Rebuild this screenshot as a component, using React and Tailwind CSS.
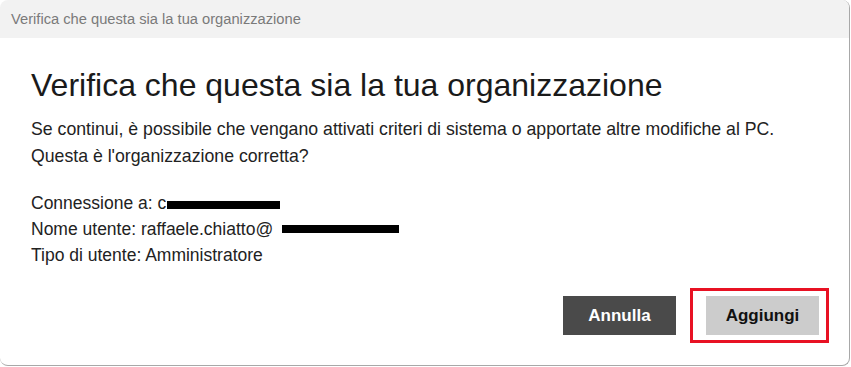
export default function App() {
  const font = { fontFamily: '"Liberation Sans", Arial, sans-serif' };

  return (
    <div className="w-[851px] h-[367px] bg-white" style={font}>
      <div className="w-[850px] h-[366px] flex flex-col rounded-[8px] border-r border-b border-[#a8a8a8] overflow-hidden bg-white">
        {/* title bar */}
        <div className="h-[38px] shrink-0 bg-[#f2f2f2] flex items-center pl-[11px] text-[14.7px] text-[#7a7a7a]">
          Verifica che questa sia la tua organizzazione
        </div>

        <div className="flex-1 flex flex-col pl-[31px] pr-[20px]">
          <h1 className="mt-[27px] text-[32px] leading-[40px] font-light text-[#1a1a1a]">
            Verifica che questa sia la tua organizzazione
          </h1>
          <p className="mt-[11px] text-[17.7px] leading-[27px] text-[#222]">
            Se continui, è possibile che vengano attivati criteri di sistema o apportate altre modifiche al PC.
            <br />
            Questa è l'organizzazione corretta?
          </p>

          <div className="mt-[20px] text-[17.5px] leading-[26px] text-[#222]">
            <div className="flex items-start h-[26px]">
              Connessione a: c
              <span className="inline-block w-[113px] h-[8px] bg-black ml-[1px] mt-[11px]" />
            </div>
            <div className="flex items-start h-[26px]">
              Nome utente: raffaele.chiatto@
              <span className="inline-block w-[117px] h-[8px] bg-black ml-[9px] mt-[9px]" />
            </div>
            <div className="h-[26px]">Tipo di utente: Amministratore</div>
          </div>

          <div className="mt-auto mb-[22px] flex justify-end gap-[14px]">
            <button className="w-[113px] h-[39px] bg-[#4a4a4a] text-white text-[17px] font-bold mt-[8px]">
              Annulla
            </button>
            <div className="border-[3px] border-[#e81123] p-[5px] pl-[13px] pr-[7px]">
              <button className="w-[113px] h-[39px] bg-[#cccccc] text-[#111] text-[17px] font-bold">
                Aggiungi
              </button>
            </div>
          </div>
        </div>
      </div>
    </div>
  );
}
